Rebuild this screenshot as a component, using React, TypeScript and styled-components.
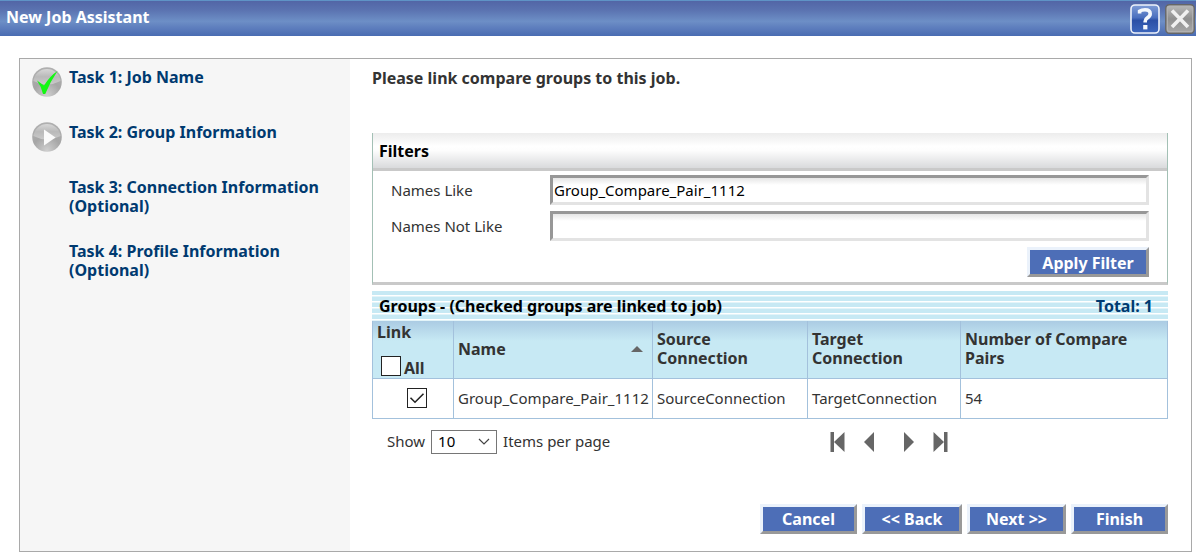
import React, { useState } from 'react';
import styled, { createGlobalStyle } from 'styled-components';

const navy = '#003a70';
const line = '#a3c1dc';

const GlobalStyle = createGlobalStyle`
  * { box-sizing: border-box; }
  body {
    margin: 0;
    background: #fff;
    color: #333;
    font-family: 'Noto Sans', Tahoma, sans-serif;
    font-size: 15px;
    line-height: 19px;
  }
  input, select, button { font: inherit; }
`;

const TitleBar = styled.header`
  display: flex;
  align-items: center;
  justify-content: space-between;
  height: 36px;
  padding: 0 1px 0 6px;
  border-top: 1px solid #5f93c6;
  background: linear-gradient(#5265a6 0%, #5a72b0 25%, #6d8fc6 58%, #5f7fbe 75%, #4a6cb2 100%);
`;

const Title = styled.h1`
  margin: 0;
  padding-bottom: 2px;
  color: #fff;
  font-size: 16px;
  line-height: 19px;
`;

const TitleActions = styled.div`
  display: flex;
  gap: 5px;
`;

const IconButton = styled.button`
  display: block;
  padding: 0;
  border: 0;
  background: none;
  cursor: pointer;
  svg { display: block; }
`;

const Frame = styled.div`
  display: grid;
  grid-template-columns: 330px minmax(0, 1fr);
  margin: 22px 4px 2px 19px;
  border: 1px solid #a9a9a9;
`;

const Sidebar = styled.nav`
  padding: 8px 12px;
  background: #f6f6f6;
`;

const TaskList = styled.ol`
  display: flex;
  flex-direction: column;
  gap: 25px;
  margin: 0;
  padding: 0;
  list-style: none;
`;

const Task = styled.li`
  display: grid;
  grid-template-columns: 30px 1fr;
  column-gap: 7px;
  min-height: 30px;
`;

const TaskLink = styled.a`
  grid-column: 2;
  padding-top: 1px;
  color: ${navy};
  font-size: 16px;
  font-weight: 700;
  text-decoration: none;
`;

const TaskIcon = styled.svg`
  display: block;
  width: 30px;
  height: 30px;
`;

const Content = styled.main`
  padding: 10px 23px 17px 22px;
`;

const Prompt = styled.p`
  margin: 0 0 45px;
  font-size: 16px;
  font-weight: 700;
`;

const FilterPanel = styled.form`
  margin-bottom: 6px;
  border: solid #a3c0b5;
  border-width: 0 1px;
  border-bottom: 3px solid #c9c9c9;
`;

const PanelHeading = styled.h2`
  margin: 0;
  padding: 9px 6px 7px;
  border-bottom: 3px solid #c9c9c9;
  background: linear-gradient(#ececec, #fff 38%, #fdfdfd 50%, #d9dadc);
  color: #000;
  font-size: 16px;
  line-height: 19px;
`;

const Fields = styled.div`
  display: grid;
  grid-template-columns: 159px 1fr;
  align-items: center;
  row-gap: 6px;
  padding: 4px 18px 5px;
`;

const TextInput = styled.input`
  width: 100%;
  height: 30px;
  padding: 0 1px;
  border: 3px solid;
  border-color: #979797 #e3e3e3 #e3e3e3 #979797;
  border-radius: 0;
  outline: none;
  background: linear-gradient(#e6e6e6, #fff 7px);
  color: #000;
`;

const Button = styled.button<{ $width: number }>`
  width: ${(p) => p.$width}px;
  height: 30px;
  padding: 2px 0 0;
  border: 3px solid;
  border-color: #ebf2fb #999 #999 #ebf2fb;
  background: #4d6eb7;
  color: #fff;
  font-size: 16px;
  font-weight: 700;
  line-height: 19px;
  white-space: nowrap;
`;

const FilterActions = styled.div`
  grid-column: 1 / -1;
  display: flex;
  justify-content: flex-end;
`;

const GroupsBar = styled.div`
  display: flex;
  align-items: center;
  justify-content: space-between;
  height: 30px;
  padding: 0 15px 0 7px;
  background: repeating-linear-gradient(#c7e9f4 0 4px, #fff 4px 5px, #e3f4f9 5px 6px);
  color: ${navy};
  font-size: 16px;
  font-weight: 700;
`;

const GroupsHeading = styled.h2`
  margin: 0;
  color: #000;
  font-size: 16px;
`;

const Table = styled.table`
  width: 100%;
  border-collapse: collapse;
  table-layout: fixed;
`;

const Col = styled.col<{ $width?: number }>`
  width: ${(p) => (p.$width ? `${p.$width}px` : 'auto')};
`;

const HeadRow = styled.tr`
  height: 57px;
  background: linear-gradient(#abcbe3, #c7e9f4 20px);
`;

const Th = styled.th`
  padding: 0 4px;
  border: 1px solid ${line};
  border-top: 0;
  font-size: 16px;
  text-align: left;
`;

const Td = styled.td`
  height: 40px;
  padding: 0 4px;
  border: 1px solid ${line};
  white-space: nowrap;
`;

const CheckCell = styled(Td)`
  padding-left: 12px;
  text-align: center;
`;

const SelectAll = styled.label`
  display: flex;
  align-items: flex-end;
  gap: 3px;
  padding: 14px 0 0 4px;
  line-height: 15px;
`;

const Checkbox = styled.input`
  appearance: none;
  display: inline-block;
  width: 20px;
  height: 20px;
  margin: 0;
  border: 1px solid #222;
  background: #fff;
  vertical-align: middle;
`;

const CheckWrap = styled.span`
  display: inline-grid;
  vertical-align: middle;
  > * { grid-area: 1 / 1; }
  svg { pointer-events: none; z-index: 1; }
`;

const SortHeader = styled.div`
  display: flex;
  align-items: center;
  justify-content: space-between;
  padding-right: 5px;
`;

const Pager = styled.div`
  display: grid;
  grid-template-columns: 457px 1fr;
  align-items: center;
  margin-bottom: 50px;
  padding-top: 11px;
`;

const PageSize = styled.label`
  display: flex;
  align-items: center;
  gap: 6px;
  padding-left: 15px;
`;

const SelectWrap = styled.span`
  display: grid;
  align-items: center;
  width: 66px;
  > * { grid-area: 1 / 1; }
  svg { justify-self: end; margin-right: 7px; pointer-events: none; z-index: 1; }
`;

const Select = styled.select`
  appearance: none;
  width: 100%;
  height: 24px;
  padding: 0 6px;
  border: 1px solid #767676;
  border-radius: 0;
  background: #fff;
  color: #000;
`;

const PageButtons = styled.div`
  display: flex;
  gap: 28px;
`;

const PagePair = styled.div`
  display: flex;
  gap: 17px;
`;

const WizardActions = styled.footer`
  display: flex;
  justify-content: flex-end;
  gap: 5px;
`;

const HelpIcon = () => (
  <svg width="30" height="30" viewBox="0 0 30 30" aria-hidden="true">
    <defs>
      <linearGradient id="help" x1="0" y1="0" x2="0" y2="1">
        <stop offset="0" stopColor="#7f9cd6" />
        <stop offset="0.45" stopColor="#4a6fbe" />
        <stop offset="0.55" stopColor="#2a4fa6" />
        <stop offset="1" stopColor="#3c66bd" />
      </linearGradient>
    </defs>
    <rect x="1" y="1" width="28" height="28" rx="4" fill="url(#help)" stroke="#eef2fa" strokeWidth="1.6" />
    <path d="M9.6 9.6V7.2Q11.6 5.8 15 5.8Q20.2 5.8 20.2 9.8Q20.2 12.2 17.4 13.9Q15.2 15.2 15.2 17.2V18.6" fill="none" stroke="#f4f7fc" strokeWidth="3.6" />
    <rect x="13.2" y="21" width="4.2" height="4.4" fill="#f4f7fc" />
  </svg>
);

const CloseIcon = () => (
  <svg width="30" height="30" viewBox="0 0 30 30" aria-hidden="true">
    <defs>
      <linearGradient id="close" x1="0" y1="0" x2="0" y2="1">
        <stop offset="0" stopColor="#b9b9b9" />
        <stop offset="0.5" stopColor="#8f8f8f" />
        <stop offset="1" stopColor="#a9a9a9" />
      </linearGradient>
    </defs>
    <rect x="0.8" y="0.8" width="28.4" height="28.4" rx="3.5" fill="url(#close)" stroke="#666" strokeWidth="1.4" />
    <rect x="2.3" y="2.3" width="25.4" height="25.4" rx="2.5" fill="none" stroke="#b4b4b4" />
    <path d="M7 6.5L23 23M23 6.5L7 23" stroke="#f0f0f0" strokeWidth="3.6" />
  </svg>
);

const Orb = ({ done }: { done?: boolean }) => (
  <TaskIcon viewBox="0 0 30 30" role="img" aria-label={done ? 'Completed' : 'Current'}>
    <defs>
      <radialGradient id="orb" cx="0.5" cy="0.95" r="0.95">
        <stop offset="0" stopColor="#cfcfcf" />
        <stop offset="0.5" stopColor="#a6a6a6" />
        <stop offset="1" stopColor="#b0b0b0" />
      </radialGradient>
      <linearGradient id="gloss" x1="0" y1="0" x2="0" y2="1">
        <stop offset="0" stopColor="#dedede" />
        <stop offset="0.5" stopColor="#bcbcbc" />
        <stop offset="1" stopColor="#d0d0d0" />
      </linearGradient>
    </defs>
    <circle cx="15" cy="15" r="14.8" fill="url(#orb)" />
    <path d="M1.4 14A13.7 13.7 0 0 1 28.6 14Q15 21 1.4 14Z" fill="url(#gloss)" opacity="0.85" />
    {done ? (
      <path d="M5 13.5L12 18.5Q18 9 25.5 4Q18 15 13.2 27L11 27Q9 19 5 13.5Z" fill="#12f712" />
    ) : (
      <path d="M12 7.5L23.5 15.5L12 23.5Z" fill="#fafafa" />
    )}
  </TaskIcon>
);

const Arrow = ({ flip, bar }: { flip?: boolean; bar?: boolean }) => (
  <svg width={bar ? 17 : 12} height="22" viewBox={bar ? '0 0 17 22' : '0 0 12 22'} aria-hidden="true">
    <g fill="#666" transform={flip ? `matrix(-1 0 0 1 ${bar ? 17 : 12} 0)` : undefined}>
      {bar && <rect x="1.5" y="1" width="3.5" height="20" />}
      <path d={bar ? 'M15.5 1V21L5 11Z' : 'M11 1V21L1 11Z'} />
    </g>
  </svg>
);

const tasks = [
  { label: 'Task 1: Job Name', icon: <Orb done /> },
  { label: 'Task 2: Group Information', icon: <Orb /> },
  { label: 'Task 3: Connection Information (Optional)' },
  { label: 'Task 4: Profile Information (Optional)' },
];

export default function App() {
  const [namesLike, setNamesLike] = useState('Group_Compare_Pair_1112');
  const [namesNotLike, setNamesNotLike] = useState('');
  const [all, setAll] = useState(false);
  const [linked, setLinked] = useState(true);

  return (
    <>
      <GlobalStyle />
      <TitleBar>
        <Title>New Job Assistant</Title>
        <TitleActions>
          <IconButton type="button" aria-label="Help"><HelpIcon /></IconButton>
          <IconButton type="button" aria-label="Close"><CloseIcon /></IconButton>
        </TitleActions>
      </TitleBar>
      <Frame>
        <Sidebar>
          <TaskList>
            {tasks.map((t) => (
              <Task key={t.label}>
                {t.icon}
                <TaskLink href="#">{t.label}</TaskLink>
              </Task>
            ))}
          </TaskList>
        </Sidebar>
        <Content>
          <Prompt>Please link compare groups to this job.</Prompt>
          <FilterPanel onSubmit={(e) => e.preventDefault()}>
            <PanelHeading>Filters</PanelHeading>
            <Fields>
              <label htmlFor="names-like">Names Like</label>
              <TextInput id="names-like" value={namesLike} onChange={(e) => setNamesLike(e.target.value)} />
              <label htmlFor="names-not-like">Names Not Like</label>
              <TextInput id="names-not-like" value={namesNotLike} onChange={(e) => setNamesNotLike(e.target.value)} />
              <FilterActions>
                <Button type="submit" $width={122}>Apply Filter</Button>
              </FilterActions>
            </Fields>
          </FilterPanel>
          <GroupsBar>
            <GroupsHeading>Groups - (Checked groups are linked to job)</GroupsHeading>
            <span>Total: 1</span>
          </GroupsBar>
          <Table>
            <colgroup>
              <Col $width={81} />
              <Col $width={199} />
              <Col $width={155} />
              <Col $width={153} />
              <Col />
            </colgroup>
            <thead>
              <HeadRow>
                <Th>
                  Link
                  <SelectAll>
                    <Checkbox
                      type="checkbox"
                      checked={all}
                      onChange={() => {
                        setAll(!all);
                        setLinked(!all);
                      }}
                    />
                    All
                  </SelectAll>
                </Th>
                <Th>
                  <SortHeader>
                    Name
                    <svg width="12" height="6" viewBox="0 0 12 6" aria-hidden="true">
                      <path d="M0 6L6 0L12 6Z" fill="#666" />
                    </svg>
                  </SortHeader>
                </Th>
                <Th>Source Connection</Th>
                <Th>Target Connection</Th>
                <Th>Number of Compare Pairs</Th>
              </HeadRow>
            </thead>
            <tbody>
              <tr>
                <CheckCell>
                  <CheckWrap>
                    <Checkbox
                      type="checkbox"
                      aria-label="Link Group_Compare_Pair_1112"
                      checked={linked}
                      onChange={() => setLinked(!linked)}
                    />
                    {linked && (
                      <svg width="20" height="20" viewBox="0 0 20 20" aria-hidden="true">
                        <path d="M3.5 9.8L8 14.2L16.5 5.7" fill="none" stroke="#222" strokeWidth="1.6" />
                      </svg>
                    )}
                  </CheckWrap>
                </CheckCell>
                <Td>Group_Compare_Pair_1112</Td>
                <Td>SourceConnection</Td>
                <Td>TargetConnection</Td>
                <Td>54</Td>
              </tr>
            </tbody>
          </Table>
          <Pager>
            <PageSize>
              Show
              <SelectWrap>
                <Select defaultValue="10">
                  <option>10</option>
                  <option>25</option>
                  <option>50</option>
                </Select>
                <svg width="12" height="7" viewBox="0 0 12 7" aria-hidden="true">
                  <path d="M1 1L6 6L11 1" fill="none" stroke="#444" strokeWidth="1.2" />
                </svg>
              </SelectWrap>
              Items per page
            </PageSize>
            <PageButtons>
              <PagePair>
                <IconButton type="button" aria-label="First page"><Arrow bar /></IconButton>
                <IconButton type="button" aria-label="Previous page"><Arrow /></IconButton>
              </PagePair>
              <PagePair>
                <IconButton type="button" aria-label="Next page"><Arrow flip /></IconButton>
                <IconButton type="button" aria-label="Last page"><Arrow flip bar /></IconButton>
              </PagePair>
            </PageButtons>
          </Pager>
          <WizardActions>
            <Button type="button" $width={97}>Cancel</Button>
            <Button type="button" $width={100}>&lt;&lt; Back</Button>
            <Button type="button" $width={99}>Next &gt;&gt;</Button>
            <Button type="button" $width={97}>Finish</Button>
          </WizardActions>
        </Content>
      </Frame>
    </>
  );
}
